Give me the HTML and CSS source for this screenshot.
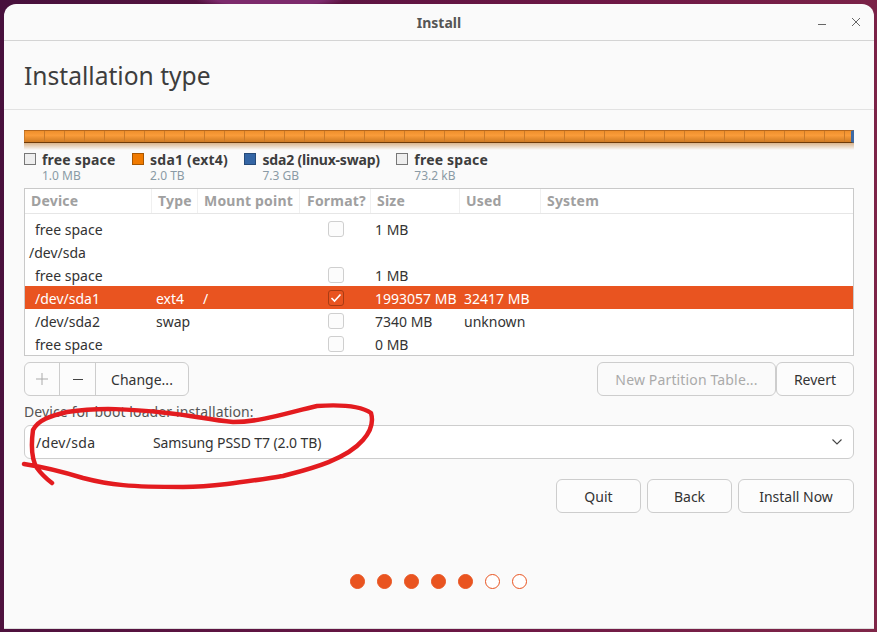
FILE: index.html
```html
<!DOCTYPE html>
<html>
<head>
    <meta charset="utf-8" />
    <title>Install</title>
    <link rel="stylesheet" href="styles.css">
</head>
<body>
    <div class="window">
        <div class="titlebar">
            <span class="titlebar-title">Install</span>
            <svg class="win-btn win-min" width="10" height="10" viewBox="0 0 10 10"><path d="M1 7.5h8" stroke="#666" stroke-width="1"/></svg>
            <svg class="win-btn win-close" width="10" height="10" viewBox="0 0 10 10"><path d="M1 1l8 8M9 1l-8 8" stroke="#666" stroke-width="1"/></svg>
        </div>
        <div class="heading"><h1>Installation type</h1></div>
        <div class="content">
            <div class="bar"></div>
            <div class="bar-shade"></div>
            <div class="legend">
                <div class="legend-item">
                    <span class="swatch"></span>
                    <div><b>free space</b><small>1.0 MB</small></div>
                </div>
                <div class="legend-item">
                    <span class="swatch swatch-ext4"></span>
                    <div><b>sda1 (ext4)</b><small>2.0 TB</small></div>
                </div>
                <div class="legend-item legend-swap">
                    <span class="swatch swatch-swap"></span>
                    <div><b>sda2 (linux-swap)</b><small>7.3 GB</small></div>
                </div>
                <div class="legend-item">
                    <span class="swatch"></span>
                    <div><b>free space</b><small>73.2 kB</small></div>
                </div>
            </div>
            <div class="table">
                <div class="row head">
                    <div class="c-device">Device</div>
                    <div class="c-type">Type</div>
                    <div class="c-mount">Mount point</div>
                    <div class="c-format">Format?</div>
                    <div class="c-size">Size</div>
                    <div class="c-used">Used</div>
                    <div class="c-system">System</div>
                </div>
                <div class="row">
                    <div class="c-device">free space</div><div class="c-type"></div><div class="c-mount"></div>
                    <div class="c-format"><span class="check"></span></div>
                    <div class="c-size">1 MB</div>
                </div>
                <div class="row">
                    <div class="c-device disk">/dev/sda</div>
                </div>
                <div class="row">
                    <div class="c-device">free space</div><div class="c-type"></div><div class="c-mount"></div>
                    <div class="c-format"><span class="check"></span></div>
                    <div class="c-size">1 MB</div>
                </div>
                <div class="row selected">
                    <div class="c-device">/dev/sda1</div><div class="c-type">ext4</div><div class="c-mount">/</div>
                    <div class="c-format"><span class="check checked"><svg width="12" height="10" viewBox="0 0 12 10"><path d="M1.5 5l3 3 6-6.5" fill="none" stroke="#fff" stroke-width="1.6"/></svg></span></div>
                    <div class="c-size">1993057 MB</div><div class="c-used">32417 MB</div>
                </div>
                <div class="row">
                    <div class="c-device">/dev/sda2</div><div class="c-type">swap</div><div class="c-mount"></div>
                    <div class="c-format"><span class="check"></span></div>
                    <div class="c-size">7340 MB</div><div class="c-used">unknown</div>
                </div>
                <div class="row">
                    <div class="c-device">free space</div><div class="c-type"></div><div class="c-mount"></div>
                    <div class="c-format"><span class="check"></span></div>
                    <div class="c-size">0 MB</div>
                </div>
            </div>
            <div class="tools">
                <div class="tool-group">
                    <div class="tool tool-icon">
                        <svg width="12" height="12" viewBox="0 0 12 12"><path d="M6 0v12M0 6h12" stroke="#aaa" stroke-width="1"/></svg>
                    </div>
                    <div class="tool tool-icon">
                        <svg width="12" height="12" viewBox="0 0 12 12"><path d="M1 6.5h10" stroke="#444" stroke-width="1"/></svg>
                    </div>
                    <div class="tool tool-text">Change...</div>
                </div>
                <div class="tool-right">
                    <button class="btn btn-off btn-table">New Partition Table...</button>
                    <button class="btn btn-revert">Revert</button>
                </div>
            </div>
            <div class="boot-label">Device for boot loader installation:</div>
            <div class="select">
                <span class="select-dev">/dev/sda</span>
                <span class="select-name">Samsung PSSD T7 (2.0 TB)</span>
                <svg width="10" height="6" viewBox="0 0 10 6"><path d="M0.5 0.5l4.5 4.5 4.5-4.5" fill="none" stroke="#444" stroke-width="1.1"/></svg>
            </div>
            <div class="actions">
                <button class="btn btn-quit">Quit</button>
                <button class="btn btn-back">Back</button>
                <button class="btn btn-install">Install Now</button>
            </div>
            <div class="steps">
                <span class="dot on"></span><span class="dot on"></span><span class="dot on"></span><span class="dot on"></span><span class="dot on"></span><span class="dot"></span><span class="dot"></span>
            </div>
        </div>
    </div>
    <!-- red marker scribble drawn over the screenshot -->
    <svg class="scribble" width="877" height="632" viewBox="0 0 877 632">
        <path d="M24 464 C50 468 70 474 83 478 C110 485 130 487 183 487 C215 487 250 481 283 476 C305 470 345 461 363 440 C372 430 373 420 371 413 C362 407 345 404 317 406 C290 412 262 422 233 422 C210 420 190 415 167 413 C130 409 100 407 67 412 C50 416 38 420 33 430 C31 445 32 460 37 468 C42 475 48 480 52 483" fill="none" stroke="#e31b1f" stroke-width="4.5" stroke-linecap="round" stroke-linejoin="round"/>
    </svg>
</body>
</html>
```

FILE: styles.css
```css
html, body {
    margin: 0;
    height: 100%;
}

body {
    width: 877px;
    height: 632px;
    overflow: hidden;
    box-sizing: border-box;
    padding: 4px 3px 3px 4px;
    background:
        radial-gradient(ellipse 75px 8px at 270px 0, #7c2a6c 0%, #7c2a6c 70%, transparent 100%),
        linear-gradient(100deg, #47103c 0%, #6d1745 60%, #7f2648 100%);
    font: 14px "Noto Sans", sans-serif;
    color: #333;
}

.window {
    height: 100%;
    box-sizing: border-box;
    background-color: #fafafa;
    border-radius: 12px 12px 0 0;
    border-bottom: 1px solid #ddd;
}

.titlebar {
    height: 36px;
    border-bottom: 1px solid #d4d4d4;
    display: flex;
    align-items: center;
    position: relative;
}

.titlebar-title {
    flex: 1;
    text-align: center;
    font-weight: bold;
    font-size: 14px;
    color: #555;
}

.win-btn {
    position: absolute;
    top: 13px;
}

.win-min { right: 47px; }
.win-close { right: 13px; }

.heading {
    height: 68px;
    border-bottom: 1px solid #e2e2e2;
    display: flex;
    align-items: center;
    padding-left: 20px;
}

h1 {
    margin: 0;
    font-size: 24.6px;
    font-weight: normal;
    color: #3d3d3d;
}

.content {
    padding: 20px 20px 0 20px;
}

.bar {
    height: 13px;
    box-sizing: border-box;
    border-top: 1px solid #b5661c;
    border-bottom: 1px solid #6e3a08;
    border-right: 3px solid #3d6aa5;
    background-image:
        repeating-linear-gradient(90deg, #c97a2a 0, #c97a2a 1px, transparent 1px, transparent 20px),
        linear-gradient(#ee8f2c, #fa9c3a 40%, #cf7a22);
}

.bar-shade {
    height: 7px;
    background: linear-gradient(#d9b48c, #fafafa);
}

.legend {
    display: flex;
    margin-top: 1px;
    gap: 16.5px;
}

.legend-item {
    display: flex;
    gap: 6px;
}

.legend-item b {
    display: block;
    font-size: 14px;
    line-height: 17px;
    letter-spacing: 0.2px;
    color: #3d3d3d;
}

.legend-swap b {
    letter-spacing: -0.2px;
}

.legend-item small {
    display: block;
    font-size: 12px;
    line-height: 15px;
    color: #8a9aa5;
}

.swatch {
    flex: none;
    width: 10px;
    height: 10px;
    margin-top: 2px;
    border: 1px solid #777;
    background-color: #eee;
}

.swatch-ext4 {
    background-color: #f07a00;
    border-color: #a85600;
}

.swatch-swap {
    background-color: #3465a4;
    border-color: #264a78;
}

.table {
    margin-top: 5px;
    border: 1px solid #c9c9c9;
    background-color: #fff;
    height: 168px;
    box-sizing: border-box;
}

.row {
    display: flex;
    height: 23px;
    line-height: 25px;
    font-size: 14px;
    color: #333;
    white-space: nowrap;
}

.row.head {
    height: 25px;
    line-height: 24px;
    font-weight: bold;
    letter-spacing: 0.2px;
    color: #a0a0a0;
    border-bottom: 1px solid #e6e6e6;
    box-sizing: border-box;
    margin-bottom: 3px;
}

.row.head > div {
    padding-left: 6px;
    border-right: 1px solid #f0f0f0;
    box-sizing: border-box;
}

.row.head .c-format { padding-left: 7px; }
.row.head .c-system { border-right: 0; }

.row.selected {
    background-color: #e95420;
    color: #fff;
}

.c-device { width: 127px; padding-left: 10px; box-sizing: border-box; }
.c-type { width: 46px; padding-left: 4px; box-sizing: border-box; }
.c-mount { width: 102px; padding-left: 5px; box-sizing: border-box; }
.c-format { width: 71px; padding-left: 28px; box-sizing: border-box; display: flex; align-items: center; }
.c-size { width: 89px; padding-left: 4px; box-sizing: border-box; }
.c-used { width: 81px; padding-left: 4px; box-sizing: border-box; }
.c-system { flex: 1; }

.c-device.disk { padding-left: 4px; }

.check {
    width: 14px;
    height: 14px;
    border: 1px solid #cfcfcf;
    border-radius: 3px;
    background-color: #fcfcfc;
    display: flex;
    align-items: center;
    justify-content: center;
}

.check.checked {
    background-color: #e95420;
    border-color: #a83c14;
}

.tools {
    display: flex;
    justify-content: space-between;
    margin-top: 6px;
}

.tool-group {
    display: flex;
    height: 34px;
    box-sizing: border-box;
    border: 1px solid #cdcdcd;
    border-radius: 6px;
    background-color: #fcfcfc;
}

.tool {
    display: flex;
    align-items: center;
    justify-content: center;
    border-right: 1px solid #cdcdcd;
}

.tool-icon { width: 34px; }
.tool-icon + .tool-icon { width: 35px; }
.tool-text { width: 92px; border-right: 0; }

.tool-right {
    display: flex;
}

.btn {
    height: 34px;
    padding: 0;
    border: 1px solid #cdcdcd;
    border-radius: 6px;
    background-color: #fcfcfc;
    font: 14px "Noto Sans", sans-serif;
    color: #333;
}

.btn-off { color: #aaa; background-color: #fafafa; letter-spacing: 0.15px; }
.btn-table { width: 179px; }
.btn-revert { width: 78px; }

.boot-label {
    margin-top: 6px;
    height: 19px;
    line-height: 19px;
    font-size: 14px;
    letter-spacing: 0.1px;
    color: #555;
}

.select {
    margin-top: 4px;
    height: 34px;
    box-sizing: border-box;
    border: 1px solid #cdcdcd;
    border-radius: 6px;
    background-color: #fff;
    display: flex;
    align-items: center;
    padding: 0 11px 0 11px;
}

.select-dev { width: 117px; letter-spacing: 0.3px; }
.select-name { flex: 1; letter-spacing: -0.1px; }

.actions {
    display: flex;
    justify-content: flex-end;
    gap: 6px;
    margin-top: 20px;
}

.btn-quit { width: 85px; }
.btn-back { width: 85px; }
.btn-install { width: 116px; }

.steps {
    display: flex;
    justify-content: center;
    gap: 12px;
    margin-top: 61px;
    padding-right: 2px;
}

.dot {
    width: 15px;
    height: 15px;
    box-sizing: border-box;
    border: 1px solid #e95420;
    border-radius: 50%;
    background-color: #fff;
}

.dot.on {
    background-color: #e95420;
}

.scribble {
    position: absolute;
    left: 0;
    top: 0;
}
```
